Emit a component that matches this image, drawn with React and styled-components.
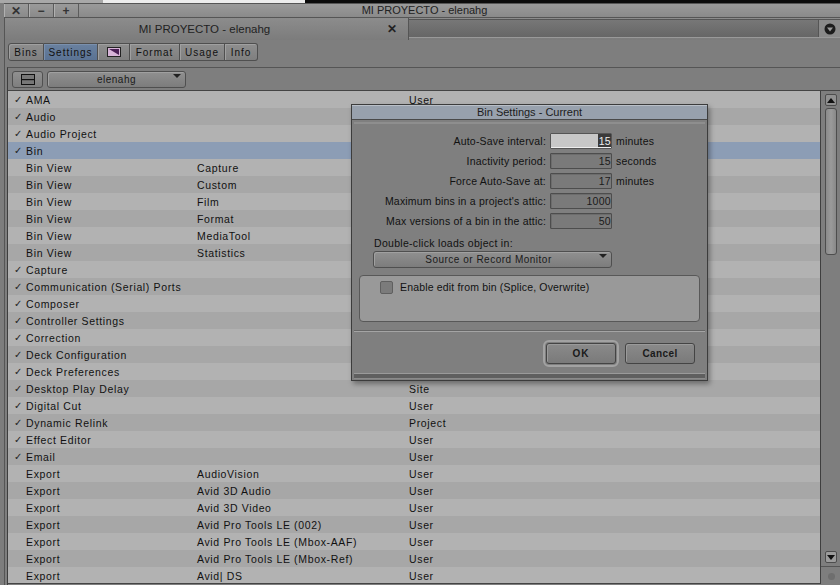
import React from "react";
import styled, { createGlobalStyle } from "styled-components";

const Global = createGlobalStyle`
  html, body { margin: 0; padding: 0; background: #7f7f7f; overflow: hidden; }
  #root { width: 840px; height: 585px; }
`;
const font = `"Liberation Sans", Arial, sans-serif`;

const Screen = styled.div`
  position: relative; width: 840px; height: 585px; overflow: hidden;
  display: flex; flex-direction: column; background: #7d7d7d;
  font-family: ${font}; font-size: 11px; color: #111;
`;
const TopStrip = styled.div`
  height: 3px; flex: none; display: flex; background: linear-gradient(90deg, #a8a8a8 103px, #ececec 103px);
`;
const StripDark = styled.div`
  margin-left: 305px; flex: 1; background: #0c0c0c;
`;
const TitleBar = styled.div`
  height: 15px; flex: none; display: flex; align-items: stretch; margin-left: 4px;
  background: linear-gradient(#9a9a9a, #8a8a8a);
  border-top: 1px solid #555; border-bottom: 1px solid #555; box-sizing: border-box; position: relative;
`;
const WinBtn = styled.div`
  width: 24px; display: flex; align-items: center; justify-content: center;
  border-right: 1px solid #5c5c5c; box-shadow: inset 1px 0 0 #b0b0b0;
  font-weight: bold; color: #333; font-size: 12px; line-height: 1;
`;
const TitleText = styled.div`
  flex: 1; text-align: center; line-height: 13px; font-size: 11px; color: #222; padding-right: 70px;
`;
const Window = styled.div`
  flex: 1; min-height: 0; display: flex; flex-direction: column; margin-left: 4px;
  border-left: 1px solid #555; background: #7e7e7e;
`;
const TabStrip = styled.div`
  height: 22px; flex: none; display: flex;
  background: linear-gradient(#8c8c8c, #7c7c7c);
`;
const TabActive = styled.div`
  width: 404px; display: flex; align-items: center; position: relative; box-sizing: border-box;
  border-right: 1px solid #555;
`;
const TabLabel = styled.div`
  flex: 1; text-align: center; font-size: 11.5px; color: #222; padding-left: 22px;
`;
const TabClose = styled.div`
  width: 20px; font-weight: bold; font-size: 12px; color: #222; text-align: center; margin-right: 6px;
`;
const TabRest = styled.div`
  flex: 1; display: flex; justify-content: flex-end; align-items: stretch; margin-top: 1px; margin-bottom: 2px;
  background: linear-gradient(#777, #666); border-top: 1px solid #555; border-bottom: 1px solid #999;
`;
const TabMenu = styled.div`
  width: 21px; display: flex; align-items: center; justify-content: center; background: #8a8a8a;
  border-left: 1px solid #555;
`;
const ModeTabs = styled.div`
  height: 27px; flex: none; display: flex; align-items: flex-start; padding: 3px 0 0 3px; box-sizing: border-box;
`;
const ModeTab = styled.div`
  height: 18px; box-sizing: border-box; padding: 0 ${p => p.$pad || 6}px; display: flex; align-items: center; justify-content: center;
  width: ${p => p.$w}px; letter-spacing: 1px; font-size: 10px; color: #111;
  border: 1px solid #4f4f4f; border-left-width: ${p => p.$first ? 1 : 0}px;
  border-radius: ${p => p.$first ? "3px 0 0 3px" : p.$last ? "0 3px 3px 0" : "0"};
  background: ${p => p.$on ? "linear-gradient(#6a819f, #5a7293)" : "linear-gradient(#8e8e8e, #7f7f7f)"};
  box-shadow: inset 1px 1px 0 ${p => p.$on ? "#7a90ad" : "#a0a0a0"};
`;
const Panel = styled.div`
  flex: 1; min-height: 0; margin-left: 2px; display: flex; flex-direction: column;
  border-left: 1px solid #3e3e3e; border-top: 1px solid #555;
`;
const Toolbar = styled.div`
  height: 23px; flex: none; box-sizing: border-box; display: flex; align-items: center; gap: 4px; padding: 0 0 0 4px;
  border-bottom: 1px solid #444; background: #7e7e7e;
`;
const IconBtn = styled.div`
  width: 31px; height: 17px; box-sizing: border-box; border: 1px solid #505050; border-radius: 3px;
  display: flex; align-items: center; justify-content: center;
  background: linear-gradient(#909090, #7e7e7e);
`;
const SelectBtn = styled.div`
  position: relative; width: ${p => p.$w}px; height: ${p => p.$h || 17}px; box-sizing: border-box;
  border: 1px solid #4f4f4f; border-radius: 3px; text-align: center; padding-right: ${p => p.$pr || 0}px;
  line-height: ${p => (p.$h || 17) - 2}px; letter-spacing: 0.5px; font-size: 10px; color: #1a1a1a;
  background: linear-gradient(#909090, #7c7c7c); box-shadow: inset 1px 1px 0 #a0a0a0;
`;
const Caret = styled.span`
  position: absolute; right: 4px; top: 2px; width: 0; height: 0;
  border-left: 4px solid transparent; border-right: 4px solid transparent; border-top: 4px solid #222;
`;
const ListArea = styled.div`
  flex: 1; min-height: 0; display: flex;
`;
const List = styled.div`
  width: 812px; height: 492px; overflow: hidden; flex: none; border-right: 1px solid #3f3f3f; border-bottom: 1px solid #444;
`;
const Row = styled.div`
  height: 17px; display: grid; grid-template-columns: 18px 171px 212px 1fr; align-items: center;
  background: ${p => p.$sel ? "#8c9db5" : p.$odd ? "#a7a7a7" : "#b2b2b2"};
  letter-spacing: 0.65px; font-size: 10.5px; color: #111; white-space: nowrap;
`;
const Check = styled.span`
  font-size: 10px; color: #222; text-align: center; padding-left: 1px; letter-spacing: 0;
`;
const Scroll = styled.div`
  flex: 1; display: flex; flex-direction: column; align-items: center; padding: 3px 5px 0 0; box-sizing: border-box; background: #7e7e7e;
`;
const ScrollBtn = styled.div`
  width: 10px; height: 10px; border: 1px solid #4d4d4d; border-radius: 2px; display: flex; align-items: center; justify-content: center;
  background: ${p => p.$down ? "#9c9c9c" : "#909090"}; flex: none;
`;
const Thumb = styled.div`
  width: 10px; height: 145px; margin-top: 2px; border: 1px solid #4d4d4d; border-radius: 3px; background: linear-gradient(90deg, #8a8a8a, #9a9a9a 50%, #888); flex: none;
`;
const ScrollGap = styled.div`flex: 1;`;
const ScrollFoot = styled.div`
  height: 19px; width: 20px; margin-top: 3px; border-top: 1px solid #555; box-sizing: border-box; flex: none; display: flex; align-items: center; justify-content: center;
`;
const Knob = styled.span`
  width: 7px; height: 7px; border-radius: 50%; background: #6e6e6e;
`;

const Dialog = styled.div`
  position: absolute; left: 351px; top: 104px; width: 357px; height: 277px; box-sizing: border-box;
  border: 1px solid #3c3c3c; background: #7f7f7f; display: flex; flex-direction: column;
  box-shadow: 2px 3px 5px rgba(0,0,0,0.35);
`;
const DlgTitle = styled.div`
  height: 15px; flex: none; box-sizing: border-box; text-align: center; line-height: 15px; font-size: 11px; color: #1c1c1c;
  background: #98a1ad; border-bottom: 1px solid #4a4a4a; box-shadow: inset 0 1px 0 #b9bfc7;
`;
const DlgBody = styled.div`
  flex: 1; margin: 2px 2px 0; border-top: 2px solid #8e8e8e; display: flex; flex-direction: column; padding-top: 9px; min-height: 0;
`;
const FormRows = styled.div`
  display: flex; flex-direction: column; gap: 4px;
`;
const FormRow = styled.div`
  display: flex; align-items: center; height: 16px;
`;
const FormLabel = styled.div`
  width: 192px; text-align: right; letter-spacing: 0.2px; font-size: 10.5px; color: #111; white-space: nowrap; flex: none;
`;
const Field = styled.div`
  width: 62px; height: 16px; margin-left: 4px; box-sizing: border-box; flex: none; text-align: right;
  border: 1px solid ${p => p.$active ? "#555" : "#4d4d4d"}; border-radius: 1px; line-height: 14px; font-size: 10.5px; letter-spacing: 0.3px;
  background: ${p => p.$active ? "#c8c8c8" : "#7a7a7a"}; color: #1a1a1a;
  box-shadow: ${p => p.$active ? "inset 0 -1px 0 #eee" : "inset 1px 1px 0 #6c6c6c"};
`;
const Highlight = styled.span`
  background: #3a3a3a; color: #eee; display: inline-block; height: 13px; padding: 0 0 0 1px;
`;
const Unit = styled.div`
  margin-left: 4px; letter-spacing: 0.2px; font-size: 10.5px; color: #111;
`;
const DclLabel = styled.div`
  margin: 8px 0 0 20px; height: 12px; line-height: 12px; letter-spacing: 0.3px; font-size: 10.5px; color: #111;
`;
const DclSelect = styled.div`
  margin: 2px 0 0 19px;
`;
const Group = styled.div`
  margin: 7px 5px 0 5px; height: 47px; box-sizing: border-box; background: #999; border: 1px solid #585858; border-radius: 4px;
  display: flex; align-items: flex-start; gap: 7px; padding: 5px 0 0 20px;
`;
const CheckBox = styled.div`
  width: 13px; height: 13px; box-sizing: border-box; background: #7b7b7b; border: 1px solid #5f5f5f; border-radius: 2px; flex: none;
`;
const GroupText = styled.div`
  letter-spacing: 0.17px; font-size: 10.5px; color: #111; line-height: 13px; white-space: nowrap;
`;
const Divider = styled.div`
  margin-top: 8px; height: 1px; background: #a4a4a4; border-top: 1px solid #666; flex: none;
`;
const BtnRow = styled.div`
  flex: 1; display: flex; justify-content: flex-end; align-items: center; gap: 9px; padding: 2px 10px 0 0;
`;
const DlgBtn = styled.div`
  width: 70px; height: 21px; box-sizing: border-box; border: 1px solid #444; border-radius: 3px;
  display: flex; align-items: center; justify-content: center; font-weight: bold; font-size: 10px; letter-spacing: ${p => p.$ls || 1}px; color: #1a1a1a;
  background: linear-gradient(#8a8a8a, #7a7a7a); box-shadow: inset 1px 1px 0 #9a9a9a;
  outline: ${p => p.$def ? "2px solid #a2a2a2" : "none"}; outline-offset: 1px;
`;
const DlgFoot = styled.div`
  height: 6px; flex: none; margin: 0 0 1px; background: #5f5f5f; border-top: 1px solid #9a9a9a; border-bottom: 1px solid #8a8a8a; box-sizing: border-box;
`;

const data = [
  [1,"AMA","","User"],[1,"Audio","",""],[1,"Audio Project","",""],[1,"Bin","",""],
  [0,"Bin View","Capture",""],[0,"Bin View","Custom",""],[0,"Bin View","Film",""],[0,"Bin View","Format",""],
  [0,"Bin View","MediaTool",""],[0,"Bin View","Statistics",""],
  [1,"Capture","",""],[1,"Communication (Serial) Ports","",""],[1,"Composer","",""],[1,"Controller Settings","",""],
  [1,"Correction","",""],[1,"Deck Configuration","",""],[1,"Deck Preferences","",""],[1,"Desktop Play Delay","","Site"],
  [1,"Digital Cut","","User"],[1,"Dynamic Relink","","Project"],[1,"Effect Editor","","User"],[1,"Email","","User"],
  [0,"Export","AudioVision","User"],[0,"Export","Avid 3D Audio","User"],[0,"Export","Avid 3D Video","User"],
  [0,"Export","Avid Pro Tools LE (002)","User"],[0,"Export","Avid Pro Tools LE (Mbox-AAF)","User"],
  [0,"Export","Avid Pro Tools LE (Mbox-Ref)","User"],[0,"Export","Avid| DS","User"],
];
const form = [
  ["Auto-Save interval:","15","minutes",true],["Inactivity period:","15","seconds"],["Force Auto-Save at:","17","minutes"],
  ["Maximum bins in a project's attic:","1000",""],["Max versions of a bin in the attic:","50",""],
];
const Tri = ({ down }) => (
  <svg width="8" height="5" viewBox="0 0 8 5"><path d={down ? "M0 0H8L4 5Z" : "M4 0L8 5H0Z"} fill="#111" /></svg>
);

export default function App() {
  return (
    <Screen>
      <Global />
      <TopStrip><StripDark /></TopStrip>
      <TitleBar>
        <WinBtn>✕</WinBtn><WinBtn>−</WinBtn><WinBtn>+</WinBtn>
        <TitleText>MI PROYECTO - elenahg</TitleText>
      </TitleBar>
      <Window>
        <TabStrip>
          <TabActive><TabLabel>MI PROYECTO - elenahg</TabLabel><TabClose>✕</TabClose></TabActive>
          <TabRest>
            <TabMenu>
              <svg width="12" height="12" viewBox="0 0 12 12"><circle cx="6" cy="6" r="5.5" fill="#1c1c1c" /><path d="M3 4.5H9L6 8.5Z" fill="#9a9a9a" /></svg>
            </TabMenu>
          </TabRest>
        </TabStrip>
        <ModeTabs>
          <ModeTab $first $w={36}>Bins</ModeTab>
          <ModeTab $on $w={54}>Settings</ModeTab>
          <ModeTab $w={32}>
            <svg width="14" height="10" viewBox="0 0 14 10"><rect x="0.5" y="0.5" width="13" height="9" fill="#d7b4d8" stroke="#222" /><path d="M2 2H12V8Z" fill="#4a1f55" /></svg>
          </ModeTab>
          <ModeTab $w={50}>Format</ModeTab>
          <ModeTab $w={45}>Usage</ModeTab>
          <ModeTab $last $w={33}>Info</ModeTab>
        </ModeTabs>
        <Panel>
          <Toolbar>
            <IconBtn>
              <svg width="14" height="11" viewBox="0 0 14 11"><rect x="0.5" y="0.5" width="13" height="10" fill="#777" stroke="#111" /><rect x="1" y="5" width="12" height="1.2" fill="#111" /></svg>
            </IconBtn>
            <SelectBtn $w={139}>elenahg<Caret /></SelectBtn>
          </Toolbar>
          <ListArea>
            <List>
              {data.map((r, i) => (
                <Row key={i} $odd={i % 2 === 1} $sel={r[1] === "Bin"}>
                  <Check>{r[0] ? "✓" : ""}</Check>
                  <span>{r[1]}</span><span>{r[2]}</span><span>{r[3]}</span>
                </Row>
              ))}
            </List>
            <Scroll>
              <ScrollBtn><Tri /></ScrollBtn>
              <Thumb />
              <ScrollGap />
              <ScrollBtn $down><Tri down /></ScrollBtn>
              <ScrollFoot><Knob /></ScrollFoot>
            </Scroll>
          </ListArea>
        </Panel>
      </Window>
      <Dialog>
        <DlgTitle>Bin Settings - Current</DlgTitle>
        <DlgBody>
          <FormRows>
            {form.map(f => (
              <FormRow key={f[0]}>
                <FormLabel>{f[0]}</FormLabel>
                <Field $active={f[3]}>{f[3] ? <Highlight>{f[1]}</Highlight> : f[1]}</Field>
                {f[2] && <Unit>{f[2]}</Unit>}
              </FormRow>
            ))}
          </FormRows>
          <DclLabel>Double-click loads object in:</DclLabel>
          <DclSelect><SelectBtn $w={239} $pr={8}>Source or Record Monitor<Caret /></SelectBtn></DclSelect>
          <Group>
            <CheckBox />
            <GroupText>Enable edit from bin (Splice, Overwrite)</GroupText>
          </Group>
          <Divider />
          <BtnRow>
            <DlgBtn $def>OK</DlgBtn>
            <DlgBtn $ls={0.4}>Cancel</DlgBtn>
          </BtnRow>
          <DlgFoot />
        </DlgBody>
      </Dialog>
    </Screen>
  );
}
